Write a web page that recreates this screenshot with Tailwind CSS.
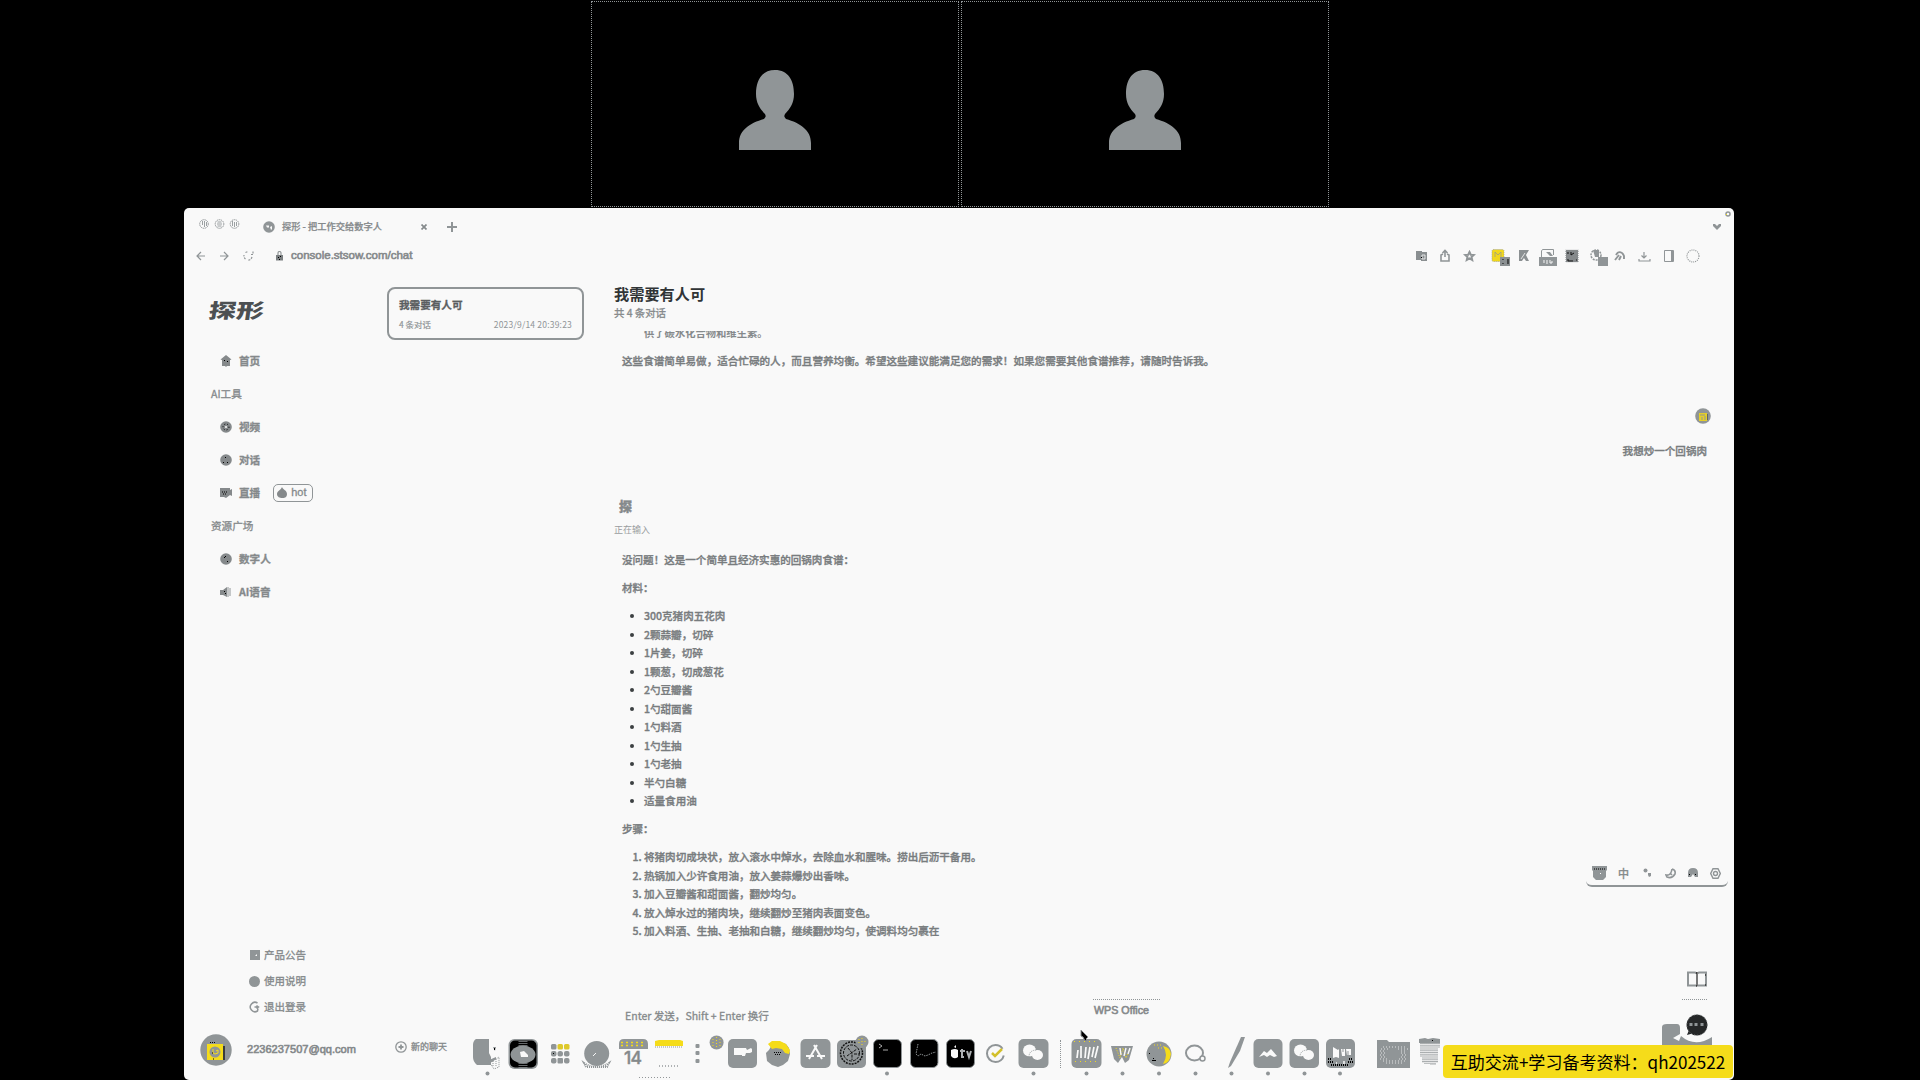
<!DOCTYPE html>
<html lang="zh-CN">
<head>
<meta charset="utf-8">
<title>探形 - 把工作交给数字人</title>
<script src="https://cdn.jsdelivr.net/npm/@tailwindcss/browser@4"></script>
</head>
<body class="relative flex h-[1080px] w-[1920px] flex-col overflow-hidden bg-black font-['Noto_Sans_CJK_SC',sans-serif] text-[10.55px] text-[#85898b]">

<!-- Meeting participants -->
<section class="flex h-[208px] shrink-0 gap-[2px] pt-px pl-[591px]">
  <div class="flex h-[206px] w-[368px] items-start justify-center border border-dotted border-[#909597] pt-[68px]">
    <svg class="h-[80px] w-[72px]" viewBox="0 0 72 80" fill="#909597"><path d="M36 0C23 0 17 10 17 24c0 9 4 15 9 20 1 2 1 3-1 5C11 53 0 60 0 73v7h72v-7C72 60 61 53 47 49c-2-2-2-3-1-5 5-5 9-11 9-20C55 10 49 0 36 0Z"/></svg>
  </div>
  <div class="flex h-[206px] w-[368px] items-start justify-center border border-dotted border-[#909597] pt-[68px]">
    <svg class="h-[80px] w-[72px]" viewBox="0 0 72 80" fill="#909597"><path d="M36 0C23 0 17 10 17 24c0 9 4 15 9 20 1 2 1 3-1 5C11 53 0 60 0 73v7h72v-7C72 60 61 53 47 49c-2-2-2-3-1-5 5-5 9-11 9-20C55 10 49 0 36 0Z"/></svg>
  </div>
</section>

<!-- Shared browser window -->
<main class="relative ml-[184px] flex h-[872px] w-[1550px] flex-col overflow-hidden rounded-[5px] bg-[#f9f9f9]">
  <header class="flex h-[37px] shrink-0 items-center">
    <svg class="-mt-[5px] ml-[15px] h-[12px] w-[41px]" viewBox="0 0 41 12" fill="none" stroke="#909597"><g stroke-dasharray="1.5 .6"><circle cx="5" cy="6" r="4.300"/><circle cx="20.500" cy="6" r="4.300"/><circle cx="35.500" cy="6" r="4.300"/></g><path d="M3.500 3v4M5.500 3v6M7.500 4v4M18 6h5M18.500 4h4M18.500 8h4M33.500 3v5M35.500 4v5M37.500 4v4" stroke-width=".9"/></svg>
    <svg class="ml-[23px] h-[12px] w-[12px]" viewBox="0 0 12 12"><circle cx="6" cy="6" r="5.800" fill="#909597"/><path d="M3 4.500h3v2H4zM7 6l2-1v3l-1 1z" fill="#f9f9f9"/></svg>
    <span class="ml-[7px] w-[136px] text-[9.250px] font-medium whitespace-nowrap [-webkit-text-stroke:.25px]">探形 - 把工作交给数字人</span>
    <svg class="ml-[3px] h-[6px] w-[6px]" viewBox="0 0 6 6" stroke="#858a8c" stroke-width="1.700"><path d="m.5.5 5 5m0-5-5 5"/></svg>
    <svg class="ml-[20px] h-[10px] w-[10px]" viewBox="0 0 10 10" stroke="#909597" stroke-width="2"><path d="M5 0v10M0 5h10"/></svg>
    <svg class="mr-[13px] ml-auto h-[6px] w-[8px]" viewBox="0 0 8 6" fill="#909597"><path d="M0 0h2l2 2 2-2h2v2L4 6 0 2z"/></svg>
  </header>

  <nav class="flex h-[22px] shrink-0 items-center pl-[12px]">
    <svg class="h-[10px] w-[58px]" viewBox="0 0 58 10" fill="none" stroke="#909597" stroke-width="1.200"><path d="M9 5H1m4-4L1 5l4 4M24 5h8m-4-4 4 4-4 4"/><path d="M57 .5v3h-3M56 6a4.300 4.300 0 0 1-4 3.200M49.500 8A4.300 4.300 0 0 1 48 4M49.500 1.500l2-.8" stroke-dasharray="2 1"/></svg>
    <svg class="ml-[22px] h-[10px] w-[7px]" viewBox="0 0 7 10"><path d="M2 4V2a1.500 1.500 0 0 1 3 0v2" fill="none" stroke="#909597" stroke-width="1.200"/><path d="M0 4h7v5.500H0z" fill="#7a7e80"/><path d="M2 6h1v1H2zM4 5h1v1H4zM3 8h1v1H3z"/></svg>
    <span class="ml-[8px] font-['Liberation_Sans',sans-serif] text-[11.500px] [-webkit-text-stroke:.6px]">console.stsow.com/chat</span>
    <div class="mr-[29px] ml-auto flex">
      <svg class="h-5 w-[24.700px]" viewBox="0 0 24.700 20"><path d="M7 5h6v1h5v9h-6v-1H7z" fill="#8a8f91"/><path d="M13 9h3v4h-3z" fill="none" stroke="#f9f9f9" stroke-width=".8"/><path d="M12 11h1v1h-1z"/></svg>
      <svg class="h-5 w-[24.700px]" viewBox="0 0 24.700 20" fill="none" stroke="#909597" stroke-width="1.600"><path d="M10 8 8 9v6h8V9l-2-1M12 11V5M9.500 7 12 4.500 14.500 7"/></svg>
      <svg class="h-5 w-[24.700px]" viewBox="0 0 24.700 20" fill="none" stroke="#909597" stroke-width="2"><path d="m11.500 6 1.300 2.700 2.900.3-2.200 2 .7 3-2.700-1.600L8.800 14l.7-3-2.200-2 2.900-.3z"/></svg>
      <svg class="h-5 w-[24.700px] overflow-visible" viewBox="0 0 24.700 20"><rect x="9" y="3.500" width="12" height="12" rx="1.500" fill="#f0d71c" stroke="#909597" stroke-width=".7" stroke-dasharray="1 1"/><path d="M12 11V6l3 3 3-3v5" fill="none" stroke="#909597" stroke-width=".7"/><path d="M17 11h10v9H17z" fill="#8b9092"/><path d="M20 13v1M20 17v1M25 13v5" stroke="#000"/></svg>
      <svg class="h-5 w-[24.700px]" viewBox="0 0 24.700 20"><path d="M11 4h10l-3 5 3 6h-3l-2-3-2 3h-3z" fill="#8b9092"/><path d="m13 13 4-6" stroke="#f9f9f9" stroke-width=".8"/></svg>
      <svg class="h-5 w-[24.700px] overflow-visible" viewBox="0 0 24.700 20"><path d="M9.500 11V5l1-1.500h11V9" fill="none" stroke="#909597"/><path d="M14 6h4l3 4h-3z" fill="#909597"/><path d="M7 11h18v9H7z" fill="#909597"/><path d="M12 14v3M15 14v4M18 14v3h2v-2" stroke="#f9f9f9" fill="none"/></svg>
      <svg class="h-5 w-[24.700px]" viewBox="0 0 24.700 20"><rect x="9" y="4" width="12" height="12" fill="#85898b"/><path d="M11 6v2M14 6v3l3-2M11 13v2h5M19 14h1" fill="none" stroke="#111"/><path d="M8.500 4h13v12h-13z" fill="none" stroke="#909597" stroke-width=".6" stroke-dasharray="1 1"/></svg>
      <svg class="h-5 w-[24.700px] overflow-visible" viewBox="0 0 24.700 20"><circle cx="14" cy="9" r="5" fill="none" stroke="#909597" stroke-width="1.500" stroke-dasharray="2 1"/><path d="M11 4h6v7h-4z" fill="#909597"/><path d="M16 11h10v9H16z" fill="#909597"/></svg>
      <svg class="h-5 w-[24.700px]" viewBox="0 0 24.700 20" fill="none" stroke="#909597" stroke-width="1.900"><path d="M10 9c2-4 6-4 8 1v3M9 14l4-5M13 14l2-4"/></svg>
      <svg class="h-5 w-[24.700px]" viewBox="0 0 24.700 20" fill="none" stroke="#909597" stroke-width="1.200"><path d="M8 13v2h11v-2M13 6v6M10.500 9.500 13 12l2.500-2.500"/></svg>
      <svg class="h-5 w-[24.700px]" viewBox="0 0 24.700 20"><path d="M8.500 4.500h9v11h-9z" fill="none" stroke="#909597"/><path d="M15 5h3v10h-3z" fill="#909597"/></svg>
      <svg class="h-5 w-[24.700px]" viewBox="0 0 24.700 20" fill="none" stroke="#909597" stroke-width="1.200" stroke-dasharray="1 1"><circle cx="13" cy="10" r="6"/></svg>
    </div>
  </nav>

  <div class="flex min-h-0 flex-1">
    <!-- Side menu -->
    <aside class="flex w-[202px] shrink-0 flex-col pt-[32px]">
      <div class="ml-[25px] flex h-[22px] w-[40px] origin-left -skew-x-6 scale-x-[1.38] items-center text-[20px] font-black text-[#4c5052]">探形</div>
      <div class="mt-[23px] flex flex-col text-[10.600px] font-bold [&>div]:flex [&>div]:h-[33px] [&>div]:items-center [&>div]:[-webkit-text-stroke:.3px]">
        <div class="gap-[7px] pl-[36px]"><svg class="h-3 w-3" viewBox="0 0 12 12"><path d="m6 0 5.500 4.500L10 5v6H7L6 12 5 11H2V5L.5 4.500z" fill="#85898b"/><path d="M4 5h1v1H4zM7 6h1v1H7z"/></svg>首页</div>
        <div class="pl-[27px] font-normal">AI工具</div>
        <div class="gap-[7px] pl-[36px]"><svg class="h-3 w-3" viewBox="0 0 12 12"><circle cx="6" cy="6" r="5.800" fill="#85898b"/><circle cx="6" cy="6" r="3" fill="none" stroke="#000" stroke-dasharray="1 2"/><path d="M5 5h2v2H5z" fill="#ddd"/></svg>视频</div>
        <div class="gap-[7px] pl-[36px]"><svg class="h-3 w-3" viewBox="0 0 12 12"><circle cx="6" cy="6" r="5.800" fill="#85898b"/><path d="M5 3h1v1H5zM3 8h1v1H3zM7 8h1v1H7z"/></svg>对话</div>
        <div class="gap-[7px] pl-[36px]"><svg class="h-3 w-3" viewBox="0 0 12 12"><path d="M0 1h10v2l2-1v7l-2-1-4 3-2-1H0z" fill="#85898b"/><path d="M2 5h6M3 7h4" stroke="#000" stroke-dasharray="1 1"/></svg>直播
          <div class="ml-[6px] flex h-[18px] w-[40px] items-center gap-[4px] rounded-[5px] border-[1.500px] border-[#909597] pl-[3px] font-['Liberation_Sans',sans-serif] text-[11px] font-normal"><svg class="h-[11px] w-[10px]" viewBox="0 0 10 11"><path d="M5 0c1 3 5 3 5 7s-3 4-5 4-5-1-5-4 4-4 5-7" fill="#85898b"/></svg>hot</div>
        </div>
        <div class="pl-[27px] font-normal">资源广场</div>
        <div class="gap-[7px] pl-[36px]"><svg class="h-3 w-3" viewBox="0 0 12 12"><circle cx="6" cy="6" r="5.800" fill="#85898b"/><path d="M5 3h1v1H5zM4 4h1v1H4zM7 8h1v1H7z"/></svg>数字人</div>
        <div class="gap-[7px] pl-[36px]"><svg class="h-3 w-3" viewBox="0 0 12 12"><path d="M0 4h3l4-3v10L3 9H0z" fill="#85898b"/><path d="M8 1v10M10 2v8" stroke="#909597"/><path d="M4 5h1v1H4zM5 7h1v1H5z"/></svg>AI语音</div>
      </div>
      <div class="mt-auto flex flex-col text-[10.500px] [&>div]:flex [&>div]:h-[26px] [&>div]:items-center [&>div]:gap-[4px] [&>div]:pl-[66px] [&>div]:[-webkit-text-stroke:.3px]">
        <div><svg class="h-[10px] w-[10px]" viewBox="0 0 10 10"><path d="M0 0h10v10H0z" fill="#909597"/><path d="m5 6 2-2v2z" fill="#f9f9f9"/></svg>产品公告</div>
        <div><svg class="-ml-px h-[11px] w-[11px]" viewBox="0 0 11 11"><circle cx="5.500" cy="5.500" r="5.500" fill="#909597"/></svg>使用说明</div>
        <div><svg class="-ml-[2px] h-[12px] w-[12px]" viewBox="0 0 12 12" fill="none" stroke="#909597" stroke-width="1.500"><path d="M9.500 2A4.700 4.700 0 1 0 9.500 10L10 7.500M6.500 6H10M8.500 4.500l2 1.500-2 1.500"/></svg>退出登录</div>
      </div>
      <div class="mt-[13px] mb-[14px] flex h-[33px] shrink-0 items-center pl-[16px]">
        <svg class="h-8 w-8" viewBox="0 0 32 32"><circle cx="16" cy="16" r="15.700" fill="#909597"/><path d="M7 10h16v16H7z" fill="#f5dc1a"/><circle cx="15" cy="18" r="5.500" fill="#909597"/><path d="M13 15v4l2 1 3-1v-3l-2 1" fill="none" stroke="#f5dc1a"/><path d="M24 12v14" stroke="#000" stroke-width="1.200"/><path d="M10 8.500h5M12 19h2M13 25h1" stroke="#000" stroke-dasharray="1 1"/></svg>
        <span class="ml-[15px] font-['Liberation_Sans',sans-serif] text-[11.050px] [-webkit-text-stroke:.6px]">2236237507@qq.com</span>
      </div>
    </aside>

    <!-- Conversation list -->
    <section class="flex w-[198px] shrink-0 flex-col pt-[20px]">
      <div class="ml-px flex h-[53px] flex-col rounded-[8px] border-2 border-[#909597] px-[10px] pt-[7px]">
        <div class="h-[17px] text-[10.600px] leading-[17px] font-bold text-[#5a5e60] [-webkit-text-stroke:.3px]">我需要有人可</div>
        <div class="mt-[5px] flex h-[13px] items-center justify-between text-[8.500px] text-[#909597]"><span class="[-webkit-text-stroke:.2px]">4 条对话</span><span class="tracking-[.2px]">2023/9/14 20:39:23</span></div>
      </div>
      <div class="mt-auto mb-[24px] flex h-[18px] items-center gap-[4px] pl-[9px] text-[9px] [-webkit-text-stroke:.3px]">
        <svg class="h-[12px] w-[12px]" viewBox="0 0 12 12" fill="none" stroke="#909597" stroke-width="1.300"><circle cx="6" cy="6" r="5.200"/><path d="M6 3.500v5M3.500 6h5" stroke-width="1.800"/></svg>新的聊天
      </div>
    </section>

    <!-- Chat -->
    <section class="flex min-w-0 flex-1 flex-col pt-[16px] pr-[27px] pl-[30px] [&_p]:pl-[8px]">
      <h1 class="h-[20px] text-[15.200px] leading-[20px] font-bold text-[#303436]">我需要有人可</h1>
      <div class="mt-[2px] h-[16px] text-[10.400px] leading-[16px] [-webkit-text-stroke:.3px]">共 4 条对话</div>
      <div class="mt-[10px] flex h-[9px] items-end overflow-hidden pl-[30px] text-[10.300px]"><span class="h-[17px] leading-[19px] font-bold">供了碳水化合物和维生素。</span></div>
      <p class="mt-[12px] h-[17px] text-[10.580px] leading-[17px] font-medium text-[#787c7e] [-webkit-text-stroke:.35px]">这些食谱简单易做，适合忙碌的人，而且营养均衡。希望这些建议能满足您的需求！如果您需要其他食谱推荐，请随时告诉我。</p>
      <div class="mt-[39px] flex flex-col items-end">
        <svg class="mr-[-4px] h-[16px] w-[16px]" viewBox="0 0 16 16"><circle cx="8" cy="8" r="7.800" fill="#909597"/><path d="M4 5h8v8H4z" fill="#e5cf28"/><path d="M5 7h5M7 9v3M10 8v4" stroke="#909597"/><path d="M12.500 6v6" stroke="#606466"/></svg>
        <div class="mt-[18px] h-[17px] leading-[17px] font-medium text-[#787c7e] [-webkit-text-stroke:.35px]">我想炒一个回锅肉</div>
      </div>
      <div class="mt-[37px] h-[20px] pl-[5px] text-[13px] leading-[20px] font-black [-webkit-text-stroke:.4px]">探</div>
      <div class="mt-[6px] h-[16px] text-[9px] leading-[16px] text-[#999da0]">正在输入</div>
      <div class="flex flex-col font-medium text-[#787c7e] [-webkit-text-stroke:.35px]">
        <p class="mt-[13px] h-[18px] leading-[18px]">没问题！这是一个简单且经济实惠的回锅肉食谱：</p>
        <p class="mt-[10px] h-[18px] leading-[18px]">材料：</p>
        <ul class="mt-[10px] ml-[30px] list-none leading-[18.550px] [&>li]:relative [&>li]:before:absolute [&>li]:before:top-[7px] [&>li]:before:-left-[14px] [&>li]:before:h-[4px] [&>li]:before:w-[4px] [&>li]:before:rounded-full [&>li]:before:bg-[#3c4042]">
          <li>300克猪肉五花肉</li><li>2颗蒜瓣，切碎</li><li>1片姜，切碎</li><li>1颗葱，切成葱花</li><li>2勺豆瓣酱</li><li>1勺甜面酱</li><li>1勺料酒</li><li>1勺生抽</li><li>1勺老抽</li><li>半勺白糖</li><li>适量食用油</li>
        </ul>
        <p class="mt-[9px] h-[18px] leading-[18px]">步骤：</p>
        <ol class="mt-[10px] ml-[30px] list-outside list-decimal leading-[18.550px]">
          <li>将猪肉切成块状，放入滚水中焯水，去除血水和腥味。捞出后沥干备用。</li>
          <li>热锅加入少许食用油，放入姜蒜爆炒出香味。</li>
          <li>加入豆瓣酱和甜面酱，翻炒均匀。</li>
          <li>放入焯水过的猪肉块，继续翻炒至猪肉表面变色。</li>
          <li>加入料酒、生抽、老抽和白糖，继续翻炒均匀，使调料均匀裹在</li>
        </ol>
      </div>
      <div class="mt-auto mb-[54px] pl-[11px] text-[10.550px] leading-[20px] [-webkit-text-stroke:.3px]">Enter 发送，Shift + Enter 换行</div>
    </section>
  </div>

  <!-- Dock tooltip -->
  <div class="absolute top-[791px] left-[909px] h-[24px] w-[67px] border-t border-dotted border-[#909597] pt-px pl-px font-['Liberation_Sans',sans-serif] text-[10.700px] leading-[19px] [-webkit-text-stroke:.6px]">WPS Office</div>

  <!-- Dock -->
  <div class="absolute bottom-0 left-[285px] flex h-[46px] [&>svg]:h-[46px] [&>svg]:w-[36.400px] [&>svg]:shrink-0 [&>svg]:overflow-visible">
    <svg viewBox="0 0 36.400 46"><path d="M7 5h13v14l2 4v8H8q-4-3-4-8V11q0-4 3-6" fill="#909597"/><path d="m21 29 9-6v10l-5 2zM24 27v6M27 25v8" fill="none" stroke="#909597" stroke-dasharray="1 1"/><path d="M24 13h3l-1 4zM20 26l7-3v2l-4 3h-3z" fill="#909597"/><path d="M25 14h1v2h-1z"/><circle cx="18.500" cy="39.500" r="2" fill="#909597"/></svg>
    <svg viewBox="0 0 36.400 46"><rect x="3.500" y="5" width="29.500" height="30" rx="6" fill="#909597"/><rect x="5" y="6.500" width="26.500" height="27" rx="5"/><ellipse cx="18" cy="20.500" rx="12.500" ry="9" fill="#909597"/><path d="M18 7v27" stroke="#909597" stroke-width="9" stroke-dasharray="1 1" opacity=".7"/><path d="m15 18 4-1 4 4v2h-7z" fill="#f9f9f9"/></svg>
    <svg viewBox="0 0 36.400 46" fill="#909597"><g><rect x="9" y="10" width="5.500" height="5.500" rx="1.500"/><rect x="15.500" y="10" width="5.500" height="5.500" rx="1.500" fill="#dec92c"/><rect x="22" y="10" width="5.500" height="5.500" rx="1.500" fill="#dec92c"/><rect x="9" y="17" width="5.500" height="5.500" rx="2"/><rect x="15.500" y="17" width="5.500" height="5.500" rx="2.500"/><rect x="22" y="17" width="5.500" height="5.500" rx="2"/><rect x="9" y="24" width="5.500" height="5.500" rx="2"/><rect x="15.500" y="24" width="5.500" height="5.500" rx="1"/><rect x="22" y="24" width="5.500" height="5.500" rx="2"/></g><path d="M11 19h1v1h-1z" fill="#000"/></svg>
    <svg viewBox="0 0 36.400 46"><path d="M6 29q12 8 25 0l-2 4H8z" fill="none" stroke="#909597" stroke-dasharray="1 1" stroke-width="2"/><circle cx="18.700" cy="19.500" r="12.500" fill="#909597"/><path d="m15 22 3-3" stroke="#f9f9f9"/></svg>
    <svg viewBox="0 0 36.400 46"><path d="M4 15v-5q0-5 5-5h19q5 0 5 5v5z" fill="#909597"/><path d="M6 8.500h25M6 11.500h23" stroke="#f5dc1a" stroke-dasharray="2 3" stroke-width="1.500"/><text x="9" y="30.500" font-size="17.500" textLength="18" font-family="Inter, sans-serif" fill="#85898b" stroke="#85898b" stroke-width=".4" font-weight="500">14</text><path d="M24 43.500h32" stroke="#909597" stroke-dasharray="1 2"/></svg>
    <svg viewBox="0 0 36.400 46"><path d="M4 12V7l4-1h21l3 1v5z" fill="#f5dc1a"/><path d="M4 13h28" stroke="#909597" stroke-dasharray="1 1"/><path d="M8 32h21" stroke="#909597" stroke-dasharray="1 2" stroke-width="2" opacity=".7"/></svg>
    <svg viewBox="0 0 36.400 46" fill="#909597"><rect x="8.500" y="10" width="4" height="4" rx="1"/><rect x="8.500" y="17" width="4" height="4" rx="1"/><rect x="8.500" y="25" width="4" height="4" rx="1"/><circle cx="29.600" cy="8.500" r="7"/><path d="M26 5v9M29.500 3v11M33 5v8" stroke="#f5dc1a" stroke-dasharray="1 2"/></svg>
    <svg viewBox="0 0 36.400 46"><rect x="4" y="5" width="29" height="29" rx="5" fill="#909597"/><path d="M10 14h12l1 2 4-2 1 1v3l-2 1h-4l-1 3h-3v-1h-8z" fill="#f9f9f9"/></svg>
    <svg viewBox="0 0 36.400 46"><path d="m14 7 6 1 6 2 3 4 1 6-2 7-5 4-5 2-6-2-5-4-1-8 3-3z" fill="#909597"/><path d="m8 10 4-3h8l6 3 4 6-1 4-4-1-3-4-6-1-4 1z" fill="#f5dc1a"/><path d="M14 18.500h8M15 20.500h5" stroke="#000" stroke-dasharray="1 1"/></svg>
    <svg viewBox="0 0 36.400 46"><rect x="3.500" y="5" width="30" height="29" rx="5" fill="#909597"/><path d="m20 11-8 14m5-14 8 14M9 22h8m3 0h8" stroke="#f9f9f9" stroke-width="2" fill="none"/></svg>
    <svg viewBox="0 0 36.400 46"><rect x="4" y="6" width="29" height="28" rx="5" fill="#909597"/><circle cx="18.500" cy="19" r="11" fill="none" stroke="#111" stroke-width="1.500" stroke-dasharray="2 1"/><circle cx="18.500" cy="19" r="8" fill="none" stroke="#111" stroke-dasharray="3 1"/><path d="m14 22 10-7m-9-1 4 5v7m2-6h5" stroke="#111" fill="none" stroke-dasharray="3 1"/><circle cx="29" cy="8" r="6.500" fill="#909597"/><path d="M26 5v6M29 4v9M32 7v3" stroke="#f5dc1a" stroke-dasharray="1 2"/></svg>
    <svg viewBox="0 0 36.400 46"><rect x="4.500" y="5.500" width="28" height="28" rx="5" stroke="#909597"/><path d="m10 10 3 2-3 2M14 16h5" fill="none" stroke="#aaa"/><circle cx="18" cy="39.500" r="2" fill="#909597"/></svg>
    <svg viewBox="0 0 36.400 46"><rect x="4.500" y="5.500" width="27.500" height="28" rx="5" stroke="#909597"/><path d="M12 10l-2 10 2 2 3-2 4 2 3-1 4-2 4-1" fill="none" stroke="#909597" stroke-dasharray="1.500 1"/></svg>
    <svg viewBox="0 0 36.400 46"><rect x="4.500" y="5.500" width="28" height="28" rx="5" stroke="#909597"/><path d="M9 16q4-2 7 0v7q-4 3-7-1zM12 13l2-2v3z" fill="#f9f9f9"/><path d="M20 15v8h2m-4-6h5m2 0 2 6 2-6" fill="none" stroke="#aeb2b4" stroke-width="2"/></svg>
    <svg viewBox="0 0 36.400 46"><circle cx="17.500" cy="19.500" r="8.500" fill="none" stroke="#909597" stroke-width="2" stroke-dasharray="46 7" stroke-dashoffset="-2"/><path d="m14 19 3 3 7-7" stroke="#d3c02b" stroke-width="2.500" fill="none"/></svg>
    <svg viewBox="0 0 36.400 46"><rect x="3.500" y="5" width="30" height="29" rx="5" fill="#909597"/><ellipse cx="14.500" cy="16.500" rx="6.500" ry="6" fill="#f9f9f9"/><ellipse cx="22.500" cy="21" rx="5.500" ry="5" fill="#f9f9f9"/><path d="M14 23q0-7 8-7" stroke="#909597" fill="none" stroke-dasharray="1 1"/><circle cx="18.500" cy="39.500" r="2" fill="#909597"/></svg>
    <div class="mt-[6px] mr-[7px] ml-[8.500px] h-[28px] w-px border-l border-dotted border-[#909597]"></div>
    <svg viewBox="0 0 36.400 46"><rect x="3.500" y="5" width="30" height="29" rx="5" fill="#909597"/><path d="M6 7.500h25M7 27.500h23" stroke="#f5dc1a" stroke-dasharray="1 4"/><path d="m10 16-1 8m4-12v12m5-11-1 11m5-11-2 12m6-12-2 10m6-11-3 12" stroke="#f9f9f9" stroke-width="1.700"/><path d="m13-4 7 7-2 2 1 1-2 1-2-4-2-1z" fill="#000" stroke="#909597"/><circle cx="18.500" cy="39.500" r="2" fill="#909597"/></svg>
    <svg viewBox="0 0 36.400 46"><path d="M7 12h22l-4 14-4 3-3-6-4 6-4-4z" fill="#909597"/><path d="m12 14 4 10 3-10 3 10 4-9" fill="none" stroke="#f5dc1a" stroke-dasharray="1 1.500"/><path d="m16 14 1 7m5-7-2 8m6-8-2 6" stroke="#f9f9f9" stroke-width="1.400"/><circle cx="18.500" cy="39.500" r="2" fill="#909597"/></svg>
    <svg viewBox="0 0 36.400 46"><circle cx="18" cy="20" r="12.500" fill="#909597"/><path d="M22 12q6 9 0 18 7-1 8-10-1-7-8-8" fill="#f5dc1a"/><path d="M13 11h9M17 14h6" stroke="#f5dc1a" stroke-dasharray="1 2"/><path d="M8 19h1v1H8zM12 24h1v1h-1zM11 26h4v1h-4z"/><circle cx="18" cy="39.500" r="2" fill="#909597"/></svg>
    <svg viewBox="0 0 36.400 46"><ellipse cx="17.500" cy="19" rx="8.500" ry="7.500" fill="none" stroke="#909597" stroke-width="2"/><circle cx="25.500" cy="24.500" r="2.500" fill="#f9f9f9" stroke="#909597" stroke-width="1.500"/><circle cx="18.500" cy="39.500" r="2" fill="#909597"/></svg>
    <svg viewBox="0 0 36.400 46"><path d="M28 3h4l-5 14-9 15-3 2 2-6z" fill="#909597"/><circle cx="18.500" cy="39.500" r="2" fill="#909597"/></svg>
    <svg viewBox="0 0 36.400 46"><rect x="3.500" y="5" width="29" height="29" rx="5" fill="#909597"/><path d="m9 23 5-6 3 2 4-4 6 7-3 1-4-2-3 2-3-2z" fill="#f9f9f9"/><circle cx="18" cy="39.500" r="2" fill="#909597"/></svg>
    <svg viewBox="0 0 36.400 46"><rect x="3.500" y="5" width="29.500" height="29" rx="5" fill="#909597"/><ellipse cx="14.500" cy="16.500" rx="6.500" ry="6" fill="#f9f9f9"/><ellipse cx="22.500" cy="21" rx="5.500" ry="5" fill="#f9f9f9"/><path d="M14 23q0-7 8-7" stroke="#909597" fill="none" stroke-dasharray="1 1"/><circle cx="18.500" cy="39.500" r="2" fill="#909597"/></svg>
    <svg viewBox="0 0 36.400 46"><rect x="4" y="5" width="29" height="29" rx="5" fill="#909597"/><path d="m11 13 5 3 1-1v9l-3-1-3 1zM19 15h4v7h-3zM24 15h5v6h-4z" fill="#f9f9f9"/><path d="M21 15v3M26 17v4" stroke="#909597"/><path d="M6 25h4M27 25h4M6 28h5M26 28h5M9 31h17" stroke="#000" stroke-width="2" stroke-dasharray="1 1"/><path d="M14 29h1M22 27v3" stroke="#f9f9f9" stroke-width="1.500"/><circle cx="18" cy="39.500" r="2" fill="#909597"/></svg>
    <svg class="ml-[16.500px]" viewBox="0 0 36.400 46"><path d="M2 6h10l2 2h21v26H2z" fill="#909597"/><path d="M8 13h22M6 15h8M23 15h10M5 17h6M26 17h6M6 19h5M26 19h6M5 21h5M27 21h5M6 23h5M26 23h6M5 25h8M24 25h9M8 27h22M11 29h16" stroke="#f9f9f9" stroke-width=".8" stroke-dasharray="1 2"/></svg>
    <svg viewBox="0 0 36.400 46"><path d="m7 5 6-1 3 1 5-1 7 1v4H7z" fill="#909597"/><path d="M9 9v14M11 9v20M13 9v21M15 9v21M17 9v21M19 9v22M21 9v22M23 9v22M25 9v20M27 9v5" stroke="#909597" stroke-width="1.500" stroke-dasharray="1 .8"/><path d="M20 6h1v1h-1z"/></svg>
  </div>

  <!-- Input method toolbar -->
  <div class="absolute top-[653px] left-[1402px] flex h-[26px] w-[142px] items-center rounded-[6px] border-b-2 border-[#909597] text-[11px]">
    <svg class="ml-[6px] h-[14px] w-[15px]" viewBox="0 0 15 14"><path d="M0 0h15v4l-1 1v6l-3 3H4l-3-3V5L0 4z" fill="#909597"/><path d="M2 3h11" stroke="#000" stroke-dasharray="1 1"/><path d="M8 7h1v1H8z" fill="#fff"/></svg>
    <span class="ml-[11px] w-[12px] [-webkit-text-stroke:.4px]">中</span>
    <svg class="ml-[13px] h-[10px] w-[9px]" viewBox="0 0 9 10" fill="#909597"><circle cx="2.500" cy="2.500" r="2"/><path d="M5 5h3v3L6 9 5 7z"/></svg>
    <svg class="ml-[13px] h-[11px] w-[11px]" viewBox="0 0 11 11" fill="none" stroke="#909597" stroke-width="1.600"><path d="M7 1q4 1 3 5-3 5-8 3l-1-2q5 1 6-6M5 5l2 2"/></svg>
    <svg class="ml-[11px] h-[10px] w-[12px]" viewBox="0 0 12 10"><path d="M1 9V5q0-5 5-5t5 5v4H8L6 6 4 9z" fill="#909597"/><path d="M2 6h1v1H2zM8 6h1v1H8z"/></svg>
    <svg class="ml-[11px] h-[11px] w-[11px]" viewBox="0 0 11 11" fill="none" stroke="#909597" stroke-width="1.400"><path d="M3 .7h5l2.300 4.800L8 10.300H3L.7 5.500z"/><circle cx="5.500" cy="5.500" r="2"/></svg>
  </div>

  <!-- Floating help buttons -->
  <svg class="absolute top-[762px] left-[1476px] h-[78px] w-[56px]" viewBox="0 0 56 78">
    <path d="M28 2.500h7l2 1 2-1h7v13H28z" fill="none" stroke="#909597" stroke-width="2"/><path d="M37 2v14" stroke="#777" stroke-width="2"/><path d="M36 3h1M36 16h1M45 5h1M45 15h1" stroke="#000"/>
    <path d="M22 29.500h25" stroke="#909597" stroke-dasharray="1 1"/>
    <path d="M2 78V57q0-3 5-3h10q3 0 3 4v6l-7 4 6 3 2-5q14 12 31 1v11z" fill="#909597"/>
    <circle cx="37" cy="55" r="10.500" fill="#252728"/><path d="m29 60-2 5 7-2z" fill="#252728"/><circle cx="37" cy="55" r="10.300" fill="none" stroke="#909597" stroke-dasharray="1 2"/><path d="M31 53v3M36 53v3M42 53v3" stroke="#909597" stroke-width="3"/>
  </svg>

  <div class="absolute right-px bottom-[2px] flex h-[33px] w-[290px] items-center justify-center rounded-[4px] bg-[#f5dc1a] text-[17.050px] whitespace-nowrap text-black">互助交流+学习备考资料：qh202522</div>
  <svg class="absolute top-[2px] right-[2px] h-[7px] w-[7px]" viewBox="0 0 7 7"><circle cx="3" cy="4" r="2" fill="none" stroke="#909597" stroke-width="1.500"/><path d="M1 4h1v1H1z" fill="#f5dc1a"/></svg>
</main>
</body>
</html>
